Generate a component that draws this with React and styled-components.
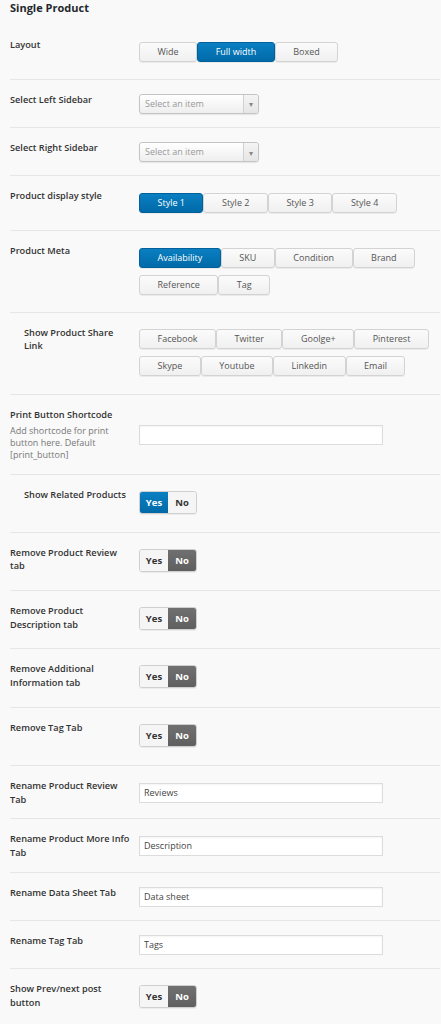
import styled, { createGlobalStyle } from "styled-components";

const GlobalStyle = createGlobalStyle`
  body {
    margin: 0;
    background: #f9f9f9;
    font-family: "Open Sans", "Liberation Sans", sans-serif;
    color: #333;
  }
`;

const shareRows = [
  ["Facebook", "Twitter", "Goolge+", "Pinterest"],
  ["Skype", "Youtube", "Linkedin", "Email"],
];

const removeTabs = [
  "Remove Product Review tab",
  "Remove Product Description tab",
  "Remove Additional Information tab",
  "Remove Tag Tab",
];

const renameTabs = [
  { label: "Rename Product Review Tab", value: "Reviews" },
  { label: "Rename Product More Info Tab", value: "Description" },
  { label: "Rename Data Sheet Tab", value: "Data sheet" },
  { label: "Rename Tag Tab", value: "Tags" },
];

const ButtonSet = ({ rows, active }) => (
  <ButtonGroup>
    {rows.map((row, i) => (
      <ButtonRow key={i}>
        {row.map((item) => (
          <OptionButton key={item} $active={item === active}>
            {item}
          </OptionButton>
        ))}
      </ButtonRow>
    ))}
  </ButtonGroup>
);

const YesNo = ({ value }) => (
  <Toggle>
    <ToggleHalf $on={value === "yes"} $tone="blue">Yes</ToggleHalf>
    <ToggleHalf $on={value === "no"} $tone="gray">No</ToggleHalf>
  </Toggle>
);

const Dropdown = () => (
  <Select>
    <Placeholder>Select an item</Placeholder>
    <Arrow>▾</Arrow>
  </Select>
);

const App = () => {
  return (
    <>
      <GlobalStyle />
      <Page>
        <Title>Single Product</Title>

        <Row>
          <Label>Layout</Label>
          <Control>
            <ButtonSet rows={[["Wide", "Full width", "Boxed"]]} active="Full width" />
          </Control>
        </Row>

        <Row>
          <Label>Select Left Sidebar</Label>
          <Control>
            <Dropdown />
          </Control>
        </Row>

        <Row>
          <Label>Select Right Sidebar</Label>
          <Control>
            <Dropdown />
          </Control>
        </Row>

        <Row>
          <Label>Product display style</Label>
          <Control>
            <ButtonSet rows={[["Style 1", "Style 2", "Style 3", "Style 4"]]} active="Style 1" />
          </Control>
        </Row>

        <Row>
          <Label>Product Meta</Label>
          <Control>
            <ButtonSet
              rows={[
                ["Availability", "SKU", "Condition", "Brand"],
                ["Reference", "Tag"],
              ]}
              active="Availability"
            />
          </Control>
        </Row>

        <Row>
          <Label $indent>Show Product Share Link</Label>
          <Control>
            <ButtonSet rows={shareRows} />
          </Control>
        </Row>

        <Row>
          <Label>
            Print Button Shortcode
            <Hint>Add shortcode for print button here. Default [print_button]</Hint>
          </Label>
          <Control>
            <TextInput type="text" defaultValue="" />
          </Control>
        </Row>

        <Row>
          <Label $indent>Show Related Products</Label>
          <Control>
            <YesNo value="yes" />
          </Control>
        </Row>

        {removeTabs.map((label) => (
          <Row key={label}>
            <Label>{label}</Label>
            <Control>
              <YesNo value="no" />
            </Control>
          </Row>
        ))}

        {renameTabs.map((tab) => (
          <Row key={tab.label}>
            <Label>{tab.label}</Label>
            <Control>
              <TextInput type="text" defaultValue={tab.value} />
            </Control>
          </Row>
        ))}

        <Row $last>
          <Label>Show Prev/next post button</Label>
          <Control>
            <YesNo value="no" />
          </Control>
        </Row>
      </Page>
    </>
  );
};

export default App;

const Page = styled.div`
  padding: 0 1px 0 10px;
`;

const Title = styled.h2`
  margin: 0 0 9px;
  font-size: 11px;
  line-height: 16px;
  font-weight: 700;
  color: #23282d;
`;

const Row = styled.div`
  display: grid;
  grid-template-columns: 129px 1fr;
  align-items: start;
  padding: 13px 0 12.3px;
  border-bottom: ${(p) => (p.$last ? "none" : "1px solid #e6e6e6")};
`;

const Label = styled.div`
  min-height: 22px;
  padding: 0 ${(p) => (p.$indent ? "10px 0 14px" : "8px 0 0")};
  font-size: 9.2px;
  line-height: 13.5px;
  font-weight: 600;
  color: #333;
`;

const Hint = styled.div`
  margin-top: 4px;
  padding-right: 16px;
  font-size: 9px;
  line-height: 12px;
  font-weight: 400;
  color: #777;
`;

const Control = styled.div`
  align-self: stretch;
  display: flex;
  align-items: center;
`;

const ButtonGroup = styled.div`
  display: flex;
  flex-direction: column;
  gap: 7px;
  padding: 3.5px 0 5px;
`;

const ButtonRow = styled.div`
  display: flex;
`;

const OptionButton = styled.button`
  height: 20px;
  padding: 0 17.5px;
  border: 1px solid ${(p) => (p.$active ? "#00619a" : "#d3d3d3")};
  border-radius: 3px;
  background: ${(p) =>
    p.$active
      ? "linear-gradient(#0a7fc2, #006aa8)"
      : "linear-gradient(#fbfbfb, #f0f0f0)"};
  box-shadow: 0 1px 0 rgba(0, 0, 0, 0.06);
  font-family: inherit;
  font-size: 9px;
  line-height: 18px;
  color: ${(p) => (p.$active ? "#fff" : "#555")};
  white-space: nowrap;
  cursor: pointer;
`;

const Toggle = styled.div`
  display: flex;
  margin: 3px 0 6px;
  border: 1px solid #cfcfcf;
  border-radius: 3px;
  overflow: hidden;
  box-shadow: 0 1px 0 rgba(0, 0, 0, 0.05);
`;

const ToggleHalf = styled.span`
  width: 28px;
  height: 21px;
  display: flex;
  align-items: center;
  justify-content: center;
  font-size: 9.5px;
  font-weight: 700;
  color: ${(p) => (p.$on ? "#fff" : "#333")};
  background: ${(p) =>
    !p.$on
      ? "#f5f5f5"
      : p.$tone === "blue"
      ? "linear-gradient(#0a7fc2, #006aa8)"
      : "linear-gradient(#707070, #5f5f5f)"};
`;

const Select = styled.div`
  width: 120px;
  height: 20px;
  box-sizing: border-box;
  display: flex;
  border: 1px solid #c4c4c4;
  border-radius: 3px;
  background: linear-gradient(#ffffff, #eeeeee);
  box-shadow: 0 1px 1px rgba(0, 0, 0, 0.08);
`;

const Placeholder = styled.span`
  flex: 1;
  padding-left: 5px;
  font-size: 9px;
  line-height: 18px;
  color: #999;
`;

const Arrow = styled.span`
  width: 14px;
  border-left: 1px solid #d0d0d0;
  display: flex;
  align-items: center;
  justify-content: center;
  font-size: 8px;
  color: #888;
  background: linear-gradient(#f4f4f4, #e6e6e6);
  border-radius: 0 3px 3px 0;
`;

const TextInput = styled.input`
  width: 244px;
  height: 20px;
  box-sizing: border-box;
  margin: 0;
  padding: 0 4px;
  border: 1px solid #dcdcdc;
  border-radius: 0;
  background: #fff;
  box-shadow: inset 0 1px 2px rgba(0, 0, 0, 0.05);
  font-family: inherit;
  font-size: 9px;
  color: #444;
  outline: none;
`;
